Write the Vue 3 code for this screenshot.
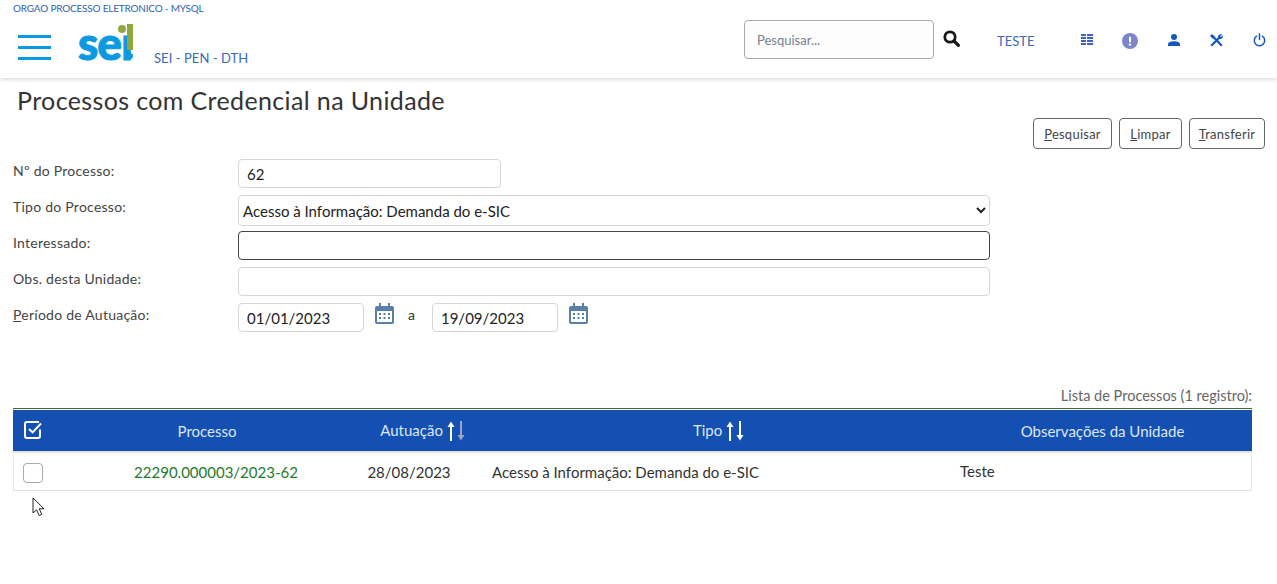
<template>
  <div class="page">
    <header class="topbar">
      <div class="orgao">ORGAO PROCESSO ELETRONICO - MYSQL</div>
      <div class="barra">
        <div class="menu-btn"><span></span><span></span><span></span></div>
        <div class="logo">
          <span class="logo-txt">seı</span>
          <span class="logo-ponto"></span>
          <span class="logo-excl"></span>
          <span class="logo-excl-ponto"></span>
        </div>
        <div class="sistema">SEI - PEN - DTH</div>
        <input class="busca" type="text" placeholder="Pesquisar..." />
        <svg class="lupa" width="17" height="17" viewBox="0 0 17 17">
          <circle cx="7" cy="7" r="5.2" fill="none" stroke="#1a1a1a" stroke-width="2.8" />
          <path d="M11 11l4.4 4.4" stroke="#1a1a1a" stroke-width="3.2" stroke-linecap="round" />
        </svg>
        <div class="unidade">TESTE</div>
        <svg class="ico i-grade" width="12" height="12" viewBox="0 0 12 12" fill="#3f62c0">
          <rect x="0" y="0" width="5" height="2" /><rect x="6" y="0" width="6" height="2" />
          <rect x="0" y="3" width="5" height="2" /><rect x="6" y="3" width="6" height="2" />
          <rect x="0" y="6" width="5" height="2" /><rect x="6" y="6" width="6" height="2" />
          <rect x="0" y="9" width="5" height="2" /><rect x="6" y="9" width="6" height="2" />
        </svg>
        <svg class="ico i-aviso" width="16" height="16" viewBox="0 0 16 16">
          <circle cx="8" cy="8" r="8" fill="#7b86cc" />
          <rect x="7" y="3.5" width="2" height="6" rx="1" fill="#fff" />
          <circle cx="8" cy="11.6" r="1.2" fill="#fff" />
        </svg>
        <svg class="ico i-user" width="12" height="12" viewBox="0 0 12 12" fill="#1558bd">
          <circle cx="6" cy="3" r="3" />
          <path d="M0 12V10.2C0 8.4 2.6 7.2 6 7.2s6 1.2 6 3V12z" />
        </svg>
        <svg class="ico i-tool" width="13" height="13" viewBox="0 0 13 13" fill="none" stroke="#1558bd">
          <path d="M2 1.5L11.8 11.8" stroke-width="2.2" />
          <path d="M10.2 2.8L1.2 11.8" stroke-width="2.2" />
          <path d="M8 3C8.200 1 10 0 11.800 .4L10 2.200 10.800 3.200 12.800 1.400C13.200 3.600 11.400 5.400 9.600 4.800z" fill="#1558bd" stroke-width="0.3" />
          <path d="M.2 2L2 .2 4.600 2.800 2.800 4.600z" fill="#1558bd" stroke-width="0.3" />
        </svg>
        <svg class="ico i-power" width="13" height="14" viewBox="0 0 13 14" fill="none" stroke="#1558bd" stroke-width="1.5">
          <path d="M6.5 .8V6.6" stroke-linecap="round" />
          <path d="M3.6 3.2a5.2 5.2 0 1 0 5.800 0" stroke-linecap="round" />
        </svg>
      </div>
    </header>

    <main class="conteudo">
      <h1 class="titulo">Processos com Credencial na Unidade</h1>
      <div class="botoes">
        <button class="b-pesq"><u>P</u>esquisar</button>
        <button class="b-limp"><u>L</u>impar</button>
        <button class="b-transf"><u>T</u>ransferir</button>
      </div>

      <form class="form" @submit.prevent>
        <div class="linha l-num">
          <label>Nº do Processo:</label>
          <input class="campo c-num" type="text" value="62" />
        </div>
        <div class="linha l-tipo">
          <label>Tipo do Processo:</label>
          <select class="campo c-grande c-sel">
            <option>Acesso à Informação: Demanda do e-SIC</option>
          </select>
        </div>
        <div class="linha l-int">
          <label>Interessado:</label>
          <input class="campo c-grande c-foco" type="text" />
        </div>
        <div class="linha l-obs">
          <label>Obs. desta Unidade:</label>
          <input class="campo c-grande" type="text" />
        </div>
        <div class="linha l-per">
          <label><u>P</u>eríodo de Autuação:</label>
          <input class="campo c-data" type="text" value="01/01/2023" />
          <svg class="cal" width="19" height="21" viewBox="0 0 19 21"><use href="#cal-ico" /></svg>
          <span class="ate">a</span>
          <input class="campo c-data" type="text" value="19/09/2023" />
          <svg class="cal" width="19" height="21" viewBox="0 0 19 21"><use href="#cal-ico" /></svg>
        </div>
      </form>

      <svg width="0" height="0" class="defs">
        <symbol id="cal-ico" viewBox="0 0 19 21">
          <path fill="#5a80a8" d="M4 0h2v3h7V0h2v3h2a2 2 0 0 1 2 2v14a2 2 0 0 1-2 2H2a2 2 0 0 1-2-2V5a2 2 0 0 1 2-2h2z" />
          <rect x="2" y="8" width="15" height="11" fill="#fff" />
          <g fill="#5a80a8">
            <rect x="4" y="10" width="2" height="2" /><rect x="8.5" y="10" width="2" height="2" /><rect x="13" y="10" width="2" height="2" />
            <rect x="4" y="14" width="2" height="2" /><rect x="8.5" y="14" width="2" height="2" /><rect x="13" y="14" width="2" height="2" />
          </g>
        </symbol>
      </svg>

      <div class="legenda">Lista de Processos (1 registro):</div>
      <table class="tabela">
        <colgroup>
          <col style="width: 60px" />
          <col style="width: 268px" />
          <col style="width: 144px" />
          <col style="width: 468px" />
          <col />
        </colgroup>
        <thead>
          <tr>
            <th class="th-chk">
              <svg width="20" height="20" viewBox="0 0 20 20" fill="none" stroke="#fff" stroke-width="2">
                <path d="M17 9.5V16a2 2 0 0 1-2 2H4a2 2 0 0 1-2-2V4a2 2 0 0 1 2-2h12" />
                <path d="M6 9l3.6 3.4L18 3.5" />
              </svg>
            </th>
            <th>Processo</th>
            <th class="th-aut">
              Autuação
              <svg class="setas" width="19" height="20" viewBox="0 0 19 20">
                <path d="M4 20V4" stroke="#fff" stroke-width="2" /><path d="M0.5 6L4 0.5 7.5 6z" fill="#fff" />
                <path d="M14 0V16" stroke="#9aa6bd" stroke-width="2" /><path d="M10.5 14L14 19.5 17.5 14z" fill="#9aa6bd" />
              </svg>
            </th>
            <th>
              Tipo
              <svg class="setas" width="19" height="20" viewBox="0 0 19 20">
                <path d="M4 20V4" stroke="#fff" stroke-width="2" /><path d="M0.5 6L4 0.5 7.5 6z" fill="#fff" />
                <path d="M14 0V16" stroke="#fff" stroke-width="2" /><path d="M10.5 14L14 19.5 17.5 14z" fill="#fff" />
              </svg>
            </th>
            <th>Observações da Unidade</th>
          </tr>
        </thead>
        <tbody>
          <tr v-for="item in registros" :key="item.numero">
            <td class="td-chk"><input type="checkbox" /></td>
            <td class="td-num"><a href="#" @click.prevent>{{ item.numero }}</a></td>
            <td class="td-data">{{ item.data }}</td>
            <td class="td-tipo">{{ item.tipo }}</td>
            <td class="td-obs"><span>{{ item.obs }}</span></td>
          </tr>
        </tbody>
      </table>
    </main>

    <svg class="cursor" width="14" height="20" viewBox="0 0 14 20">
      <path d="M1 1v15l3.6-3.2 2.6 5.800 2.600-1.200-2.600-5.600h4.800z" fill="#fff" stroke="#222" stroke-width="1" />
    </svg>
  </div>
</template>

<script setup>
const registros = [
  {
    numero: '22290.000003/2023-62',
    data: '28/08/2023',
    tipo: 'Acesso à Informação: Demanda do e-SIC',
    obs: 'Teste'
  }
]
</script>

<style scoped>
.page {
  position: relative;
  height: 584px;
  overflow: hidden;
  font-family: Lato, "Open Sans", sans-serif;
  font-size: 14px;
  color: #333;
  background: #fff;
}
.topbar {
  height: 78px;
  box-sizing: border-box;
  box-shadow: 0 1px 5px rgba(0, 0, 0, 0.18);
  padding: 2px 0 0 13px;
}
.orgao {
  font-size: 10px;
  line-height: 12px;
  letter-spacing: -0.2px;
  color: #2f5fb5;
}
.barra {
  display: flex;
  align-items: center;
  height: 44px;
  margin-top: 6px;
}
.menu-btn {
  width: 33px;
  margin-left: 5px;
  display: flex;
  flex-direction: column;
  gap: 8px;
  margin-top: 10px;
}
.menu-btn span {
  height: 3px;
  background: #0b9ae2;
}
.logo {
  position: relative;
  width: 56px;
  height: 40px;
  margin-left: 28px;
  margin-top: 3px;
  flex: none;
}
.logo-txt {
  position: absolute;
  left: -1px;
  bottom: -2px;
  font-size: 46px;
  line-height: 46px;
  font-weight: 900;
  letter-spacing: -1px;
  color: #0b9ae2;
  -webkit-text-stroke: 1px #0b9ae2;
}
.logo-ponto {
  position: absolute;
  left: 39px;
  top: 1px;
  width: 8px;
  height: 8px;
  border-radius: 50%;
  background: #8ea83f;
}
.logo-excl {
  position: absolute;
  left: 48px;
  top: 0;
  width: 6px;
  height: 26px;
  background: #8ea83f;
}
.logo-excl-ponto {
  position: absolute;
  left: 48px;
  top: 29px;
  width: 6px;
  height: 6px;
  border-radius: 50%;
  background: #0b9ae2;
}
.sistema {
  margin-left: 19px;
  margin-top: 31px;
  font-size: 13px;
  color: #3a6ab8;
  letter-spacing: 0.05px;
  width: 590px;
  flex: none;
}
.busca {
  width: 190px;
  height: 39px;
  box-sizing: border-box;
  border: 1px solid #a8a8ac;
  border-radius: 4px;
  padding: 0 12px;
  font: 13px Lato, sans-serif;
  background: #fdfdfd;
  flex: none;
  margin-top: -5px;
}
.busca::placeholder {
  color: #77818f;
}
.lupa {
  margin-left: 9px;
  margin-top: -8px;
  flex: none;
}
.unidade {
  margin-left: 37px;
  margin-top: -2px;
  font-size: 13px;
  color: #3a6ab8;
  width: 46px;
  flex: none;
}
.ico {
  flex: none;
}
.i-grade {
  margin-left: 38px;
  margin-top: -5px;
}
.i-aviso {
  margin-left: 29px;
  margin-top: -2px;
}
.i-user {
  margin-left: 30px;
  margin-top: -4px;
}
.i-tool {
  margin-left: 30px;
  margin-top: -4px;
}
.i-power {
  margin-left: 30px;
  margin-top: -4px;
}
.conteudo {
  padding: 0 12px 0 13px;
}
.titulo {
  margin: 7px 0 0 4px;
  font-size: 25px;
  line-height: 30px;
  font-weight: 400;
  letter-spacing: 0.37px;
  color: #333;
}
.botoes {
  display: flex;
  justify-content: flex-end;
  gap: 7px;
  margin-top: 3px;
}
.botoes button {
  height: 31px;
  padding: 0;
  border: 1px solid #666;
  border-radius: 4px;
  background: #fff;
  font: 13px Lato, sans-serif;
  letter-spacing: 0.25px;
  color: #444;
}
.b-pesq {
  width: 79px;
}
.b-limp {
  width: 63px;
}
.b-transf {
  width: 76px;
}
.form {
  margin-top: 10px;
}
.linha {
  display: flex;
  align-items: flex-start;
}
.linha label {
  width: 225px;
  flex: none;
  line-height: 24px;
  letter-spacing: 0.25px;
  color: #444;
}
.l-tipo,
.l-obs,
.l-per {
  margin-top: 7px;
}
.l-int {
  margin-top: 5px;
}
.campo {
  box-sizing: border-box;
  height: 29px;
  border: 1px solid #d3d6dc;
  border-radius: 4px;
  padding: 0 8px;
  font: 15px Lato, sans-serif;
  color: #222;
  background: #fff;
}
.c-num {
  width: 263px;
}
.c-grande {
  width: 752px;
}
.c-sel {
  height: 31px;
  padding: 0;
}
.c-foco {
  border-color: #444;
}
.c-data {
  width: 126px;
}
.cal {
  margin: 0 0 0 11px;
  flex: none;
}
.ate {
  margin: 0 17px 0 14px;
  line-height: 24px;
}
.defs {
  position: absolute;
}
.legenda {
  margin-top: 54px;
  margin-right: 13px;
  text-align: right;
  font-size: 14.5px;
  line-height: 20px;
  color: #666;
}
.tabela {
  width: 1239px;
  table-layout: fixed;
  border-collapse: separate;
  border-spacing: 0;
  border-top: 1px solid #4d6b2e;
  margin-top: 2px;
  font-size: 15px;
}
.tabela th {
  box-sizing: border-box;
  height: 44px;
  padding: 0;
  background: #1450b2;
  color: #dce6f5;
  font-weight: 400;
  border-top: 1px solid #f0f3f0;
  border-bottom: 2px solid #dfe3ea;
  vertical-align: middle;
}
.th-chk {
  text-align: left;
}
.th-chk svg {
  display: block;
  margin: -2px 0 0 10px;
}
.th-aut {
  padding-left: 20px !important;
}
.setas {
  vertical-align: -5px;
}
.tabela td {
  box-sizing: border-box;
  height: 38px;
  padding: 0;
  border-bottom: 1px solid #e0e0e0;
}
.tabela td:first-child {
  border-left: 1px solid #e8e8e8;
}
.tabela td:last-child {
  border-right: 1px solid #e8e8e8;
}
.td-chk input {
  appearance: none;
  display: block;
  width: 20px;
  height: 20px;
  margin: 2px 0 0 9px;
  border: 1px solid #aaa;
  border-radius: 4px;
  background: #fff;
}
.td-num {
  text-align: center;
  padding-left: 18px !important;
}
.td-num a {
  color: #1d7a2c;
  text-decoration: none;
}
.td-data {
  text-align: center;
  padding-right: 8px !important;
}
.td-tipo,
.td-obs {
  padding-left: 7px !important;
}
.td-obs span {
  position: relative;
  top: -1px;
}
.cursor {
  position: absolute;
  left: 32px;
  top: 497px;
}
</style>
